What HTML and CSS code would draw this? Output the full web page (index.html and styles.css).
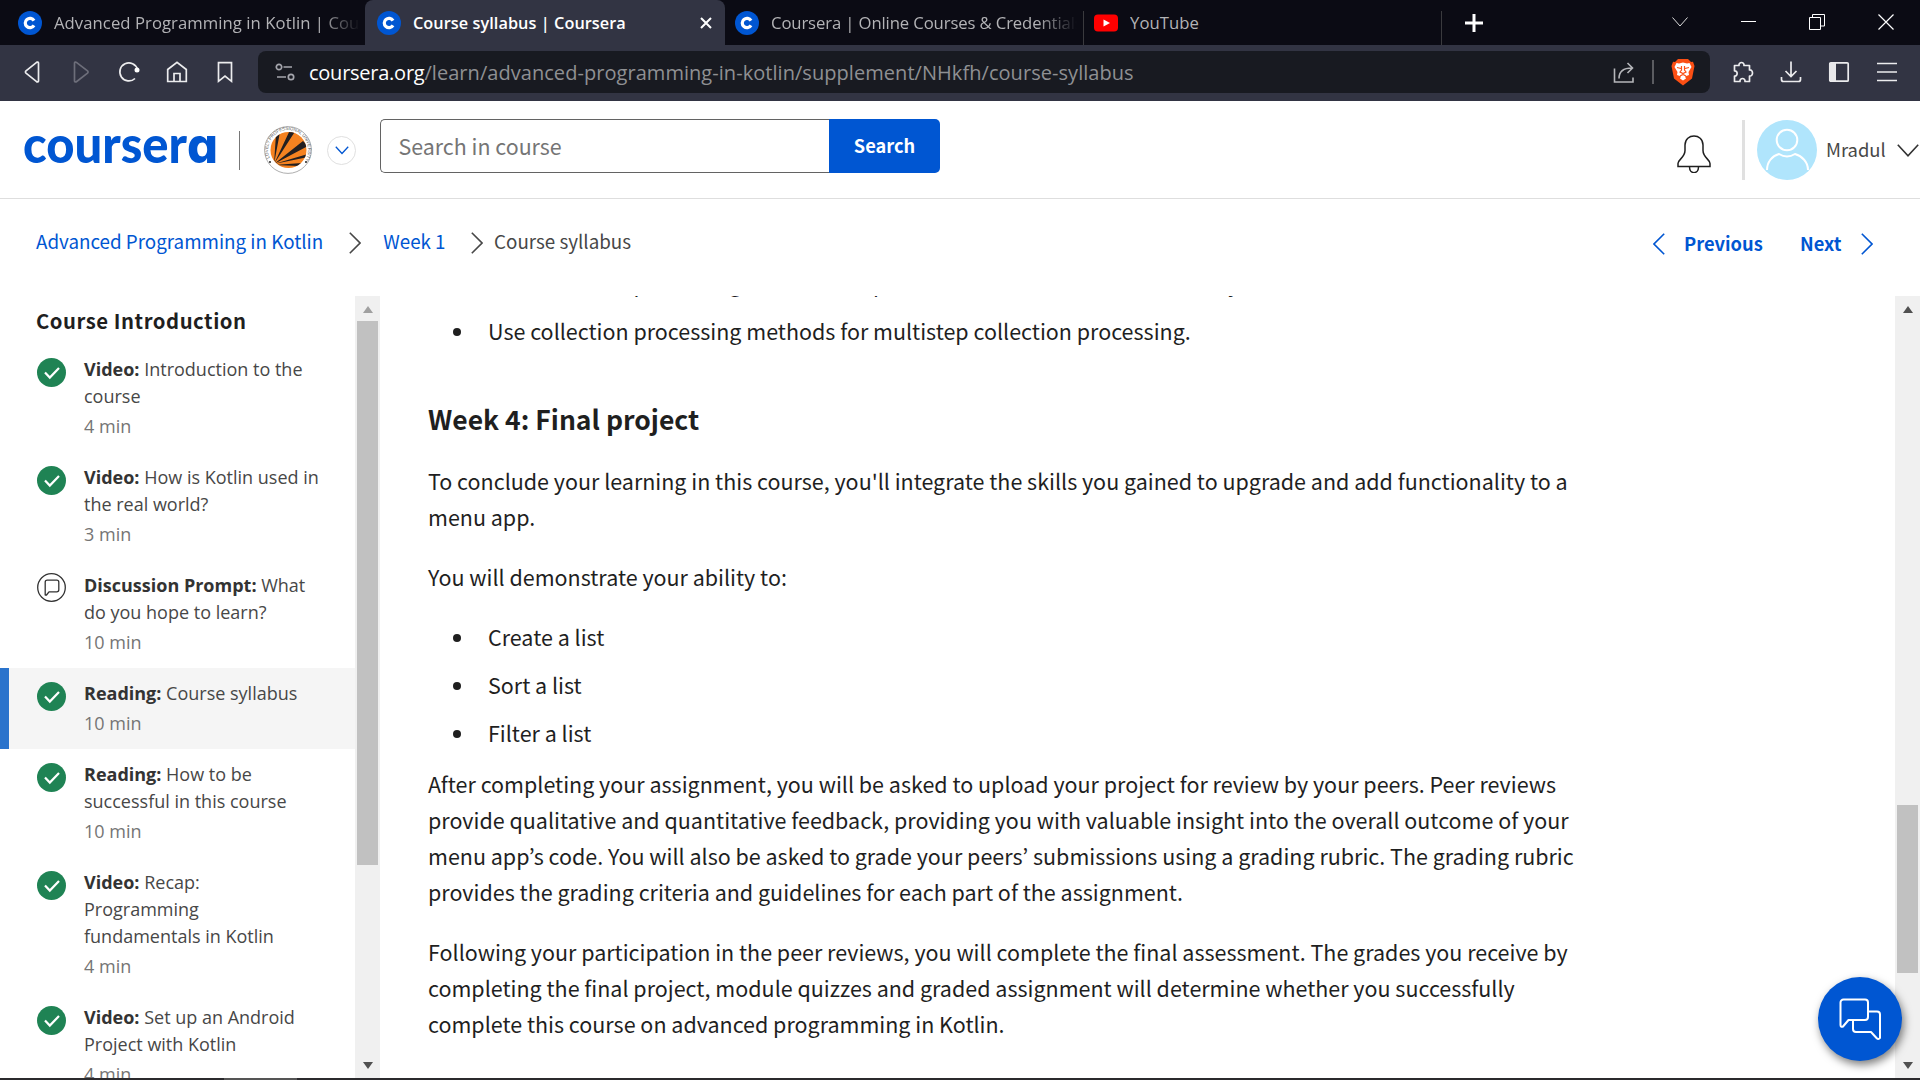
FILE: index.html
```html
<!DOCTYPE html>
<html lang="en">
<head>
<meta charset="utf-8">
<title>Course syllabus | Coursera</title>
<link rel="stylesheet" href="styles.css">
</head>
<body>
<svg class="defs" aria-hidden="true">
  <symbol id="fav" viewBox="0 0 24 24"><circle cx="12" cy="12" r="12" fill="#0056d2"/><path d="M16 9.6a4.7 4.7 0 1 0 0 4.8" fill="none" stroke="#fff" stroke-width="3.2"/></symbol>
  <symbol id="check" viewBox="0 0 29 29"><circle cx="14.5" cy="14.5" r="14.5" fill="#1f8354"/><path d="M8 14.6l4.8 5L22 10" fill="none" stroke="#fff" stroke-width="2.2"/></symbol>
  <symbol id="right" viewBox="0 0 12 22"><path d="M.8.8L11 11 .8 21.2" fill="none" stroke="currentColor" stroke-width="1.6"/></symbol>
</svg>

<div class="tabs">
  <div class="tab first"><svg class="fav"><use href="#fav"/></svg><span class="title fade">Advanced Programming in Kotlin | Coursera</span></div>
  <div class="tab active"><svg class="fav"><use href="#fav"/></svg><span class="title">Course syllabus | Coursera</span>
    <svg class="tab-close" viewBox="0 0 12 12"><path d="M1 1l10 10M11 1L1 11" stroke="#fff" stroke-width="2"/></svg></div>
  <div class="tab third"><svg class="fav"><use href="#fav"/></svg><span class="title fade">Coursera | Online Courses &amp; Credentials</span></div>
  <div class="tab fourth"><svg class="fav" viewBox="0 0 24 24"><rect y="3.5" width="24" height="17" rx="4" fill="red"/><path d="M9.500 8.400v7.200L16 12z" fill="#fff"/></svg><span class="title">YouTube</span></div>
  <svg class="plus" viewBox="0 0 18 18"><path d="M9 0v18M0 9h18" stroke="#fff" stroke-width="3"/></svg>
  <div class="window">
    <svg width="16" height="10" viewBox="0 0 16 10"><path d="M.5.5L8 9 15.500.5" fill="none" stroke="#ddd"/></svg>
    <svg width="15" height="15" viewBox="0 0 15 15"><path d="M0 7.500h15" stroke="#fff"/></svg>
    <svg width="16" height="16" viewBox="0 0 16 16"><path d="M.5 3.500h11v12H.5zM3.500 3V.5h12v11.500H12" fill="none" stroke="#fff"/></svg>
    <svg width="16" height="16" viewBox="0 0 16 16"><path d="M.5.5l15 15M15.500.5l-15 15" stroke="#fff" stroke-width="1.200"/></svg>
  </div>
</div>

<div class="toolbar">
  <div class="nav-icons">
    <svg viewBox="0 0 24 24"><path d="M17.500 3v18a1.200 1.200 0 0 1-1.900.7L5 13.200a1.600 1.600 0 0 1 0-2.400L15.600 2.300a1.200 1.200 0 0 1 1.900.7z"/></svg>
    <svg class="dim" viewBox="0 0 24 24"><path d="M5.500 3v18a1.200 1.200 0 0 0 1.900.7L18.500 13.200a1.600 1.600 0 0 0 0-2.400L7.400 2.300a1.200 1.200 0 0 0-1.900.7z"/></svg>
    <svg viewBox="0 0 24 24"><path d="M20.500 9.500A9 9 0 1 0 18 18.500"/><circle cx="20" cy="10" r="2.500" fill="#fff" stroke="none"/></svg>
    <svg viewBox="0 0 24 24"><path d="M2.700 9.500L12 2.300l9.300 7.200v12H2.700zM9 21.500v-8h6v8"/></svg>
    <svg viewBox="0 0 24 24"><path d="M5.500 2.700h13v18.600L12 16l-6.500 5.300z"/></svg>
  </div>
  <div class="address">
    <svg class="site" viewBox="0 0 20 18"><g fill="none" stroke="#a5a6ad" stroke-width="1.700"><circle cx="4" cy="4" r="2.700"/><path d="M8.500 4H17M2 14h9"/><circle cx="16" cy="14" r="2.700"/></g></svg>
    <span class="url"><b>coursera.org</b>/learn/advanced-programming-in-kotlin/supplement/NHkfh/course-syllabus</span>
    <svg class="share" viewBox="0 0 22 22"><path d="M1.500 7v13.500H20V16M6 17c0-7 4-10.500 13-10.500M14.500 1.500l5 5-5 5" fill="none" stroke="#b5b6ba" stroke-width="1.600"/></svg>
    <i class="bar"></i>
    <svg class="brave" viewBox="0 0 24 28"><path d="M7 1h10l3 3 2-.3L23.500 8 21 20.500 12 27.500 3 20.500.5 8 2 3.700 4 4z" fill="#fb4f14"/><path d="M12 4.500l4 1 2.500-.5 2 4-3 5 .5 3-4 1.500 1 2L12 22.500 9 20.500l1-2L6 17l.5-3-3-5 2-4 2.500.5z" fill="#fff"/><path d="M6 9.500l4 1M18 9.500l-4 1M10.500 8v4l-1.500 2 3 1.500 3-1.500-1.500-2V8M9 18l3-1.500 3 1.500" fill="none" stroke="#fb4f14" stroke-width="1.200"/></svg>
  </div>
  <div class="ext">
    <svg viewBox="0 0 24 24"><path d="M3.500 5.500H8C7.500 1.500 13.500 1.500 13 5.500h5.500V10c4-.5 4 6.500 0 6v5.500H14c.5-4-5.500-4-5 0H3.500V16c3.500.5 3.500-5.500 0-5z" stroke-linejoin="round"/></svg>
    <svg viewBox="0 0 24 24"><path d="M12 1.500V16M6.500 11L12 16.500 17.500 11M2.500 17v2.500a2 2 0 0 0 2 2h15a2 2 0 0 0 2-2V17"/></svg>
    <svg viewBox="0 0 24 24"><rect x="2.800" y="2.800" width="18.400" height="18.400" rx="1"/><path d="M2 3h7v18H2z" fill="#e8e8ea" stroke="none"/></svg>
    <svg viewBox="0 0 24 24"><path d="M2 3.500h20M2 12h20M2 20.500h20"/></svg>
  </div>
</div>

<header class="header">
  <svg class="logo" viewBox="0 0 194 50" role="img" aria-label="coursera"><text y="37.500"><tspan class="logo-text" x="0" textLength="164" lengthAdjust="spacingAndGlyphs">courser</tspan><tspan class="logo-a" x="164" textLength="31" lengthAdjust="spacingAndGlyphs">a</tspan></text></svg>
  <i class="rule"></i>
  <svg class="crest" viewBox="0 0 48 48">
    <defs><clipPath id="disc"><circle cx="24.500" cy="24" r="18"/></clipPath><path id="ring" d="M24 44a20 20 0 1 1 .1 0"/></defs>
    <circle cx="24" cy="24" r="23.400" fill="#fff" stroke="#999" stroke-width=".8"/>
    <circle cx="24.500" cy="24" r="18" fill="#f58220"/>
    <g clip-path="url(#disc)" fill="#231f20"><path d="M10 38L12 8l4-2zM10 38L26 4h6zM10 38L39 15l5 5zM10 38l34-10v3zM10 39l28-2-3 3z"/></g>
    <text class="ring-text"><textPath href="#ring" startOffset="23">LOVELY PROFESSIONAL UNIVERSITY</textPath></text>
    <circle cx="6" cy="36" r="1" fill="#222"/><circle cx="42" cy="36" r="1" fill="#222"/>
  </svg>
  <span class="round"><svg width="14" height="9" viewBox="0 0 14 9"><path d="M.8.8L7 7.500 13.200.8" fill="none" stroke="#0056d2" stroke-width="1.300"/></svg></span>
  <div class="search"><div class="field">Search in course</div><div class="button">Search</div></div>
  <svg class="bell" viewBox="0 0 34 38"><path d="M1 31.500v-3c0-4 7-6 7-13V10c0-12 18-12 18 0v5.500c0 7 7 9 7 13v3zM12.500 32c0 7.500 9 7.500 9 0" fill="none" stroke="#1f1f1f" stroke-width="1.500"/></svg>
  <i class="divider"></i>
  <svg class="avatar" viewBox="0 0 60 60"><circle cx="30" cy="30" r="30" fill="#b0e5fc"/><g fill="none" stroke="#fff" stroke-width="2"><circle cx="30" cy="20" r="10.300"/><path d="M10 50c0-8 5-14 12-16 5 3 11 3 16 0 7 2 13 8 13 16"/></g></svg>
  <span class="user">Mradul</span>
  <svg class="caret" viewBox="0 0 22 13"><path d="M.8.8L11 11.800 21.200.8" fill="none" stroke="#333" stroke-width="1.600"/></svg>
</header>

<nav class="crumbs">
  <a>Advanced Programming in Kotlin</a><svg class="sep one"><use href="#right"/></svg>
  <a>Week 1</a><svg class="sep two"><use href="#right"/></svg>
  <span>Course syllabus</span>
  <div class="pager"><svg class="flip"><use href="#right"/></svg><b>Previous</b><b class="next">Next</b><svg><use href="#right"/></svg></div>
</nav>

<div class="content">
  <aside class="side">
    <h3>Course Introduction</h3>
    <div class="item"><svg><use href="#check"/></svg><div><p><b>Video:</b> Introduction to the<br>course</p><small>4 min</small></div></div>
    <div class="item"><svg><use href="#check"/></svg><div><p><b>Video:</b> How is Kotlin used in<br>the real world?</p><small>3 min</small></div></div>
    <div class="item prompt"><svg viewBox="0 0 29 29"><g fill="none" stroke="#333" stroke-width="1.300"><circle cx="14.500" cy="14.500" r="13.800"/><path d="M8.200 22V9.200a2 2 0 0 1 2-2h9.600a2 2 0 0 1 2 2v7.600a2 2 0 0 1-2 2H12L9.500 22z" stroke-linejoin="round"/></g></svg><div><p><b>Discussion Prompt:</b> What<br>do you hope to learn?</p><small>10 min</small></div></div>
    <div class="item current"><svg><use href="#check"/></svg><div><p><b>Reading:</b> Course syllabus</p><small>10 min</small></div></div>
    <div class="item"><svg><use href="#check"/></svg><div><p><b>Reading:</b> How to be<br>successful in this course</p><small>10 min</small></div></div>
    <div class="item"><svg><use href="#check"/></svg><div><p><b>Video:</b> Recap:<br>Programming<br>fundamentals in Kotlin</p><small>4 min</small></div></div>
    <div class="item"><svg><use href="#check"/></svg><div><p><b>Video:</b> Set up an Android<br>Project with Kotlin</p><small>4 min</small></div></div>
  </aside>
  <div class="scroll"><i class="up muted"></i><i class="thumb side-thumb"></i><i class="down"></i></div>
  <main class="main">
    <ul class="top-list">
      <li>Use collection processing methods for parallel transformations consistently.</li>
      <li>Use collection processing methods for multistep collection processing.</li>
    </ul>
    <h2>Week 4: Final project</h2>
    <p>To conclude your learning in this course, you'll integrate the skills you gained to upgrade and add functionality to a<br>menu app.</p>
    <p>You will demonstrate your ability to:</p>
    <ul>
      <li>Create a list</li>
      <li>Sort a list</li>
      <li>Filter a list</li>
    </ul>
    <p>After completing your assignment, you will be asked to upload your project for review by your peers. Peer reviews<br>provide qualitative and quantitative feedback, providing you with valuable insight into the overall outcome of your<br>menu app’s code. You will also be asked to grade your peers’ submissions using a grading rubric. The grading rubric<br>provides the grading criteria and guidelines for each part of the assignment.</p>
    <p>Following your participation in the peer reviews, you will complete the final assessment. The grades you receive by<br>completing the final project, module quizzes and graded assignment will determine whether you successfully<br>complete this course on advanced programming in Kotlin.</p>
  </main>
  <div class="scroll"><i class="up"></i><i class="thumb main-thumb"></i><i class="down"></i></div>
</div>
<div class="taskbar"><i></i></div>
<div class="chat"><svg viewBox="0 0 42 42"><g fill="none" stroke="#fff" stroke-width="2" stroke-linejoin="round"><path d="M1.500 27V4.500a3 3 0 0 1 3-3H26a3 3 0 0 1 3 3V19a3 3 0 0 1-3 3H9.500L4 28.500q-2.500 1-2.500-1.500z"/><path d="M29 13.500h9a3 3 0 0 1 3 3V40q-1.500 2-3.500 0L32 34H17a3 3 0 0 1-3-3v-9"/></g></svg></div>
</body>
</html>
```
FILE: styles.css
```css
* { box-sizing: border-box; }
body { margin: 0; width: 1920px; height: 1080px; overflow: hidden; display: flex; flex-direction: column; background: #fff; color: #1f1f1f; font-family: "Noto Sans CJK KR", sans-serif; position: relative; }
svg { display: block; flex: none; }
i { display: block; flex: none; }
.defs { position: absolute; width: 0; height: 0; }

/* Tab strip */
.tabs { height: 45px; flex: none; display: flex; align-items: center; background: #0b0b14; color: #b3b3b6; font: 16.7px/24px "Open Sans", sans-serif; }
.tab { height: 45px; display: flex; align-items: center; flex: none; white-space: nowrap; }
.fav { width: 24px; height: 24px; margin-right: 12px; }
.title { overflow: hidden; letter-spacing: .05px; }
.fade { -webkit-mask-image: linear-gradient(90deg, #000 calc(100% - 40px), transparent); mask-image: linear-gradient(90deg, #000 calc(100% - 40px), transparent); }
.first { width: 365px; padding: 0 5px 0 18px; }
.active { width: 360px; padding: 0 12px; background: #323443; border-radius: 8px 8px 0 0; color: #fff; font-weight: 600; font-size: 16.3px; }
.tab-close { width: 12px; height: 12px; margin-left: auto; margin-right: 1px; }
.third { width: 359px; padding: 0 7px 0 10px; background: linear-gradient(#3a3a3e, #3a3a3e) right bottom / 1px 34px no-repeat; }
.third .title { letter-spacing: -.12px; }
.fourth { width: 358px; padding-left: 10px; background: linear-gradient(#3a3a3e, #3a3a3e) right bottom / 1px 34px no-repeat; }
.plus { width: 18px; height: 18px; margin-left: 23px; }
.window { flex: 1; display: flex; align-items: center; justify-content: flex-end; gap: 53px; padding-right: 26.500px; padding-bottom: 2px; }

/* Toolbar */
.toolbar { height: 56px; flex: none; display: flex; align-items: flex-start; background: #323443; padding-top: 6px; }
.nav-icons, .ext { height: 42px; display: flex; align-items: center; gap: 24px; }
.nav-icons { width: 258px; padding-left: 21px; }
.ext { padding-left: 20.500px; }
.nav-icons svg, .ext svg { width: 24px; height: 24px; fill: none; stroke: #ececee; stroke-width: 1.700; }
.nav-icons .dim { stroke: #6d6e7a; }
.address { width: 1452px; height: 42px; display: flex; align-items: center; background: #181a21; border-radius: 8px; padding: 0 15px 0 17px; }
.site { width: 20px; height: 18px; margin-right: 14px; }
.url { font: 20px/28px "Open Sans", sans-serif; color: #8f9093; letter-spacing: .05px; flex: 1; white-space: nowrap; padding-top: 1px; }
.url b { font-weight: 400; color: #fff; letter-spacing: -.25px; }
.share { width: 22px; height: 23px; }
.bar { width: 2px; height: 24px; background: #5b5c61; margin: 0 17px 0 17px; }
.brave { width: 24px; height: 28px; }

/* Site header */
.header { height: 98px; flex: none; display: flex; align-items: center; border-bottom: 1px solid #dedede; font-size: 18.400px; padding-top: 1px; }
.logo { width: 194px; height: 50px; margin-left: 23px; overflow: visible; }
.logo text { fill: #0056d2; }
.logo-text { font: 900 51px Lato, sans-serif; }
.logo-a { font: 800 49px Inter, sans-serif; font-feature-settings: "cv11"; }
.rule { width: 1px; height: 39px; background: #777; margin: 0 24px 0 22px; }
.crest { width: 48px; height: 48px; }
.ring-text { font: 4.500px "Liberation Sans", sans-serif; fill: #555; }
.round { width: 29px; height: 29px; margin-left: 15px; border: 1px solid #e0e0e0; border-radius: 50%; display: flex; align-items: center; justify-content: center; }
.search { display: flex; height: 54px; width: 560px; margin: -8px 0 0 24px; }
.field { width: 449px; border: 1px solid #636363; border-right: 0; border-radius: 5px 0 0 5px; padding-left: 17.500px; font-size: 21.400px; line-height: 51px; color: #757575; }
.button { width: 111px; background: #0056d2; border-radius: 0 5px 5px 0; color: #fff; font-weight: 700; font-size: 18.200px; line-height: 53px; text-align: center; }
.bell { width: 34px; height: 38px; margin: 8px 0 0 737px; }
.divider { width: 3px; height: 60px; background: #e0e0e0; margin: 0 12px 0 31px; }
.avatar { width: 60px; height: 60px; }
.user { margin-left: 9px; width: 71px; color: #474747; padding-bottom: 2px; }
.caret { width: 22px; height: 13px; }

/* Breadcrumbs */
.crumbs { height: 97px; flex: none; display: flex; align-items: center; padding-left: 36px; font-size: 18.800px; line-height: 28px; color: #474747; padding-bottom: 13px; }
.crumbs a { color: #0056d2; }
.crumbs svg { width: 12px; height: 22px; }
.crumbs .sep { margin: 3px 22.500px 0 25.500px; }
.crumbs .two { margin-right: 11px; }
.pager { margin-left: auto; margin-right: 47px; display: flex; align-items: center; color: #0056d2; font-size: 18.300px; padding-top: 4px; }
.pager svg { margin-top: 2px; }
.pager .flip { transform: scaleX(-1); margin-right: 19px; }
.pager b { width: 81px; }
.pager .next { margin-left: 35px; width: 42px; margin-right: 19px; }

/* Course outline */
.content { flex: 1; min-height: 0; display: flex; overflow: hidden; }
.side { width: 355px; overflow: hidden; font: 18px/27px "Open Sans", sans-serif; color: #474747; }
.side h3 { margin: 0; padding: 9px 0 9px 36px; font: 700 20.300px/30px "Noto Sans CJK KR", sans-serif; letter-spacing: .54px; color: #1f1f1f; }
.item { display: flex; padding: 12px 0 12px 36.500px; white-space: nowrap; }
.item svg { width: 29px; height: 29px; margin: 2px 18.500px 0 0; }
.item.prompt svg { margin-top: 1px; }
.item p { margin: 0 0 3px; }
.item b { color: #333; }
.item small { display: block; font-size: 18px; color: #757575; }
.item.current { background: #f5f5f5; border-left: 9px solid #2a73cc; padding-left: 27.500px; }

/* Scrollbars */
.scroll { width: 25px; flex: none; background: #f0f0f0; display: flex; flex-direction: column; align-items: center; padding: 10px 0 9px; }
.up, .down { border: 5.500px solid transparent; }
.up { border-top: 0; border-bottom: 7px solid #505050; }
.up.muted { border-bottom-color: #a0a0a0; }
.down { border-bottom: 0; border-top: 7px solid #505050; margin-top: auto; }
.thumb { width: 21px; background: #c1c1c1; }
.side-thumb { height: 544px; margin-top: 8px; }
.main-thumb { height: 168px; margin-top: 492px; }

/* Reading */
.main { width: 1515px; padding-left: 48px; font-size: 21.490px; line-height: 36px; white-space: nowrap; overflow: hidden; }
.main p { margin: 0 0 24px; }
.main h2 { margin: 52px 0 26px; font-size: 26.500px; line-height: 36px; }
.main ul { list-style: none; margin: 0 0 15px; padding: 0; }
.main .top-list { margin: -31px 0 0; }
.main li { display: flex; align-items: center; margin-bottom: 12px; }
.main li:last-child { margin-bottom: 0; }
.main li::before { content: ""; width: 8px; height: 8px; border-radius: 50%; background: #1f1f1f; margin: 2px 27.500px 0 24.500px; }

.taskbar { height: 2px; flex: none; background: #2b2a2d; }
.taskbar i { height: 2px; width: 73px; margin-left: 224px; background: #555; }

/* Floating chat button */
.chat { position: absolute; left: 1818px; top: 977px; width: 84px; height: 84px; border-radius: 50%; background: #0056d2; box-shadow: 2px 4px 8px rgba(0,0,0,.5); display: flex; align-items: center; justify-content: center; }
.chat svg { width: 42px; height: 42px; }
```
